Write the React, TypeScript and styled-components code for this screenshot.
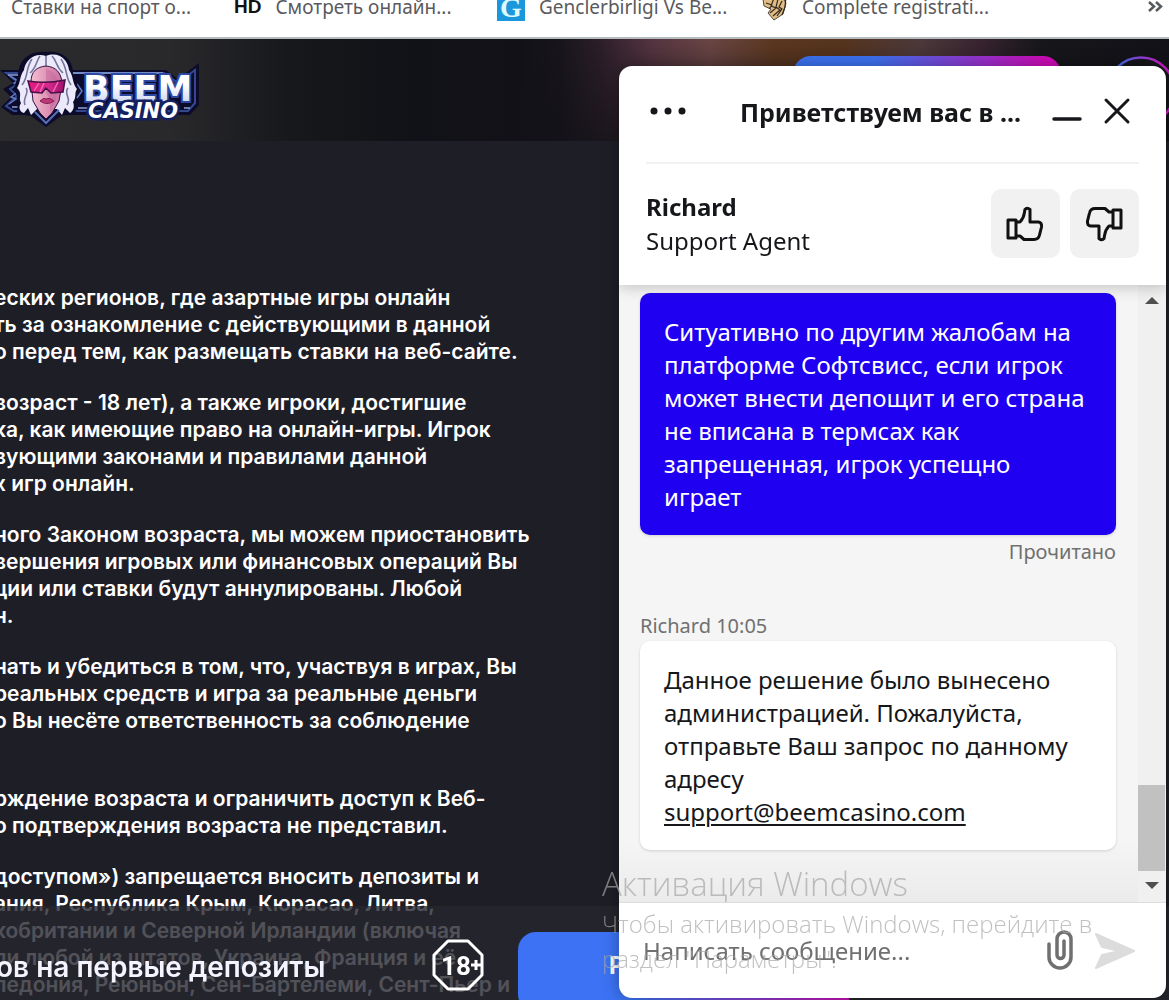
import React from "react";
import styled, { createGlobalStyle } from "styled-components";

const GlobalStyle = createGlobalStyle`
  * { box-sizing: border-box; }
  body { margin: 0; background: #1e1e27; font-family: "Noto Sans", sans-serif; overflow: hidden; }
  button, input { font-family: inherit; }
`;

const Page = styled.div`
  height: 100vh;
  overflow: hidden;
  display: flex;
  flex-direction: column;
`;

const Bookmarks = styled.nav`
  flex: none;
  display: flex;
  height: 39px;
  padding: 0 6px 0 11px;
  background: #fff;
  border-bottom: 2px solid #b4bcbf;
  overflow: hidden;
`;

const Bookmark = styled.a<{ $width: number }>`
  display: flex;
  align-items: center;
  gap: 14px;
  height: 40px;
  margin-top: -13px;
  width: ${(p) => p.$width}px;
  color: #5a5a5e;
  font-size: 19px;
  line-height: 28px;
  text-decoration: none;
  white-space: nowrap;
`;

const Hd = styled.b`
  color: #111;
  font: 700 19px/28px "Liberation Sans", sans-serif;
`;

const MoreBookmarks = styled.button`
  display: flex;
  margin: 0 0 0 auto;
  padding: 0;
  border: 0;
  background: none;
`;

const Header = styled.header`
  flex: none;
  display: flex;
  align-items: flex-start;
  height: 102px;
  overflow: hidden;
  background:
    linear-gradient(180deg, rgba(18, 17, 23, 0) 0, rgba(18, 17, 23, 0.7) 100%) right / 660px 100% no-repeat,
    linear-gradient(90deg, #2b2b2e 0, #29292c 170px, #17181b 290px, #111217 410px, #121117 520px, #17151b 560px, #2c1e29 600px, #533440 650px, #6a4544 710px, #5b371f 775px, #57341d 840px, #4c393b 920px, #38232f 980px, #17171b 1040px, #111117 1169px);
`;

const HeaderActions = styled.div`
  display: flex;
  gap: 45px;
  margin: 17px -7px 0 auto;
`;

const HeaderPill = styled.button`
  width: 268px;
  height: 70px;
  border: 0;
  border-radius: 18px;
  background: linear-gradient(90deg, #3c72f0 30%, #d00ab8 95%);
`;

const Article = styled.main`
  flex: 1;
  min-height: 0;
  overflow: hidden;
  padding: 143px 0 0;
  margin-left: -6px;
  color: #fff;
  font-family: Inter, sans-serif;
  font-weight: 600;
  font-size: 21px;
  line-height: 27px;
`;

const Paragraph = styled.p`
  margin: 0 0 24px;
  white-space: pre;
`;

const PromoBar = styled.aside`
  position: fixed;
  left: 0;
  right: 0;
  bottom: 0;
  height: 94px;
  display: flex;
  overflow: hidden;
  background: rgba(37, 37, 46, 0.8);
`;

const PromoText = styled.strong`
  width: 432px;
  margin-left: -4px;
  padding-top: 44px;
  color: #f3f4ff;
  font: 600 28px/34px Inter, sans-serif;
  white-space: nowrap;
`;

const AgeMark = styled.svg`
  width: 52px;
  height: 52px;
  margin: 33px 34px 0 4px;
`;

const PromoButton = styled.button`
  width: 332px;
  height: 80px;
  margin-top: 26px;
  padding: 0 0 12px 91px;
  border: 0;
  border-radius: 18px;
  background: linear-gradient(90deg, #3c72f3 35%, #c812b4 100%);
  color: #fff;
  font: 700 24px/32px Inter, sans-serif;
  text-align: left;
`;

const Chat = styled.section`
  position: fixed;
  top: 66px;
  right: 3px;
  bottom: 2px;
  width: 547px;
  max-width: calc(100% - 6px);
  display: flex;
  flex-direction: column;
  border-radius: 13px;
  overflow: hidden;
  background: #fff;
  color: #15171a;
  box-shadow: 0 0 16px rgba(0, 0, 0, 0.35);
`;

const ChatTop = styled.div`
  flex: none;
  padding: 0 27px;
  z-index: 1;
  box-shadow: 0 2px 14px rgba(0, 0, 0, 0.22);
`;

const TitleRow = styled.div`
  display: flex;
  align-items: center;
  height: 98px;
  padding: 0 8px 6px 4px;
  border-bottom: 2px solid #f2f2f3;
`;

const IconButton = styled.button`
  flex: none;
  display: flex;
  align-items: center;
  justify-content: center;
  padding: 0;
  border: 0;
  background: none;
  color: inherit;
`;

const Title = styled.h1`
  flex: 1;
  margin: 0 28px 0 52px;
  padding-top: 2px;
  font-size: 25px;
  line-height: 32px;
  font-weight: 700;
  text-align: center;
  white-space: nowrap;
`;

const WindowButtons = styled.div`
  display: flex;
  gap: 20px;
`;

const AgentRow = styled.div`
  display: flex;
  align-items: center;
  gap: 10px;
  height: 121px;
  padding-bottom: 2px;
`;

const Agent = styled.div`
  flex: 1;
  font-size: 24px;
  line-height: 34px;
`;

const Rate = styled.button`
  display: flex;
  align-items: center;
  justify-content: center;
  width: 69px;
  height: 69px;
  padding: 0 2px 0 0;
  border: 0;
  border-radius: 10px;
  background: #f1f1f1;
  color: #111;
`;

const Body = styled.div`
  flex: 1;
  min-height: 0;
  display: flex;
  background: linear-gradient(180deg, #f5f5f5 90%, #ebebeb 100%);
  border-bottom: 1px solid #ddd;
`;

const Messages = styled.div`
  flex: 1;
  display: flex;
  flex-direction: column;
  padding: 8px 22px 0 21px;
`;

const Bubble = styled.p<{ $own?: boolean }>`
  margin: 0;
  padding: 22px 24px;
  border-radius: 10px;
  background: ${(p) => (p.$own ? "#2000f0" : "#fff")};
  color: ${(p) => (p.$own ? "#fff" : "#15171a")};
  font-size: 24px;
  line-height: 33px;
  box-shadow: 0 1px 3px rgba(0, 0, 0, 0.15);

  a { color: inherit; text-decoration-thickness: 2px; text-underline-offset: 3px; }
`;

const Note = styled.div<{ $end?: boolean }>`
  color: #707070;
  font-size: 20px;
  line-height: 28px;
  padding: ${(p) => (p.$end ? "3px 0 0" : "46px 0 1px")};
  text-align: ${(p) => (p.$end ? "right" : "left")};
`;

const ScrollTrack = styled.div`
  display: flex;
  flex-direction: column;
  align-items: center;
  width: 28px;
  padding: 11px 1px 12px 0;
  background: #f0f0f0;
`;

const ScrollThumb = styled.div`
  width: 27px;
  height: 86px;
  margin: auto 0 10px;
  background: #c1c1c1;
`;

const Arrow = styled.svg`
  width: 14px;
  height: 9px;
  fill: #505050;
`;

const Composer = styled.form`
  flex: none;
  display: flex;
  align-items: center;
  height: 95px;
  padding: 0 30px 0 24px;
`;

const MessageInput = styled.input`
  flex: 1;
  min-width: 0;
  padding: 0;
  border: 0;
  outline: 0;
  background: none;
  font-size: 24px;
  line-height: 32px;

  &::placeholder { color: #707070; opacity: 1; }
`;

const Activation = styled.div`
  position: fixed;
  left: 602px;
  top: 862px;
  width: 540px;
  color: rgba(165, 165, 165, 0.7);
  font-family: "Open Sans", sans-serif;
  font-weight: 350;
  font-size: 24px;
  line-height: 35px;
  pointer-events: none;
  white-space: nowrap;
`;

const ActivationTitle = styled.div`
  font-size: 33px;
  line-height: 44px;
`;

const paragraphs = [
  "еских регионов, где азартные игры онлайн\nть за ознакомление с действующими в данной\nо перед тем, как размещать ставки на веб-сайте.",
  "возраст - 18 лет), а также игроки, достигшие\nка, как имеющие право на онлайн-игры. Игрок\nвующими законами и правилами данной\nх игр онлайн.",
  "ного Законом возраста, мы можем приостановить\nвершения игровых или финансовых операций Вы\nции или ставки будут аннулированы. Любой\nн.",
  "нать и убедиться в том, что, участвуя в играх, Вы\nреальных средств и игра за реальные деньги\nо Вы несёте ответственность за соблюдение\n ",
  "рждение возраста и ограничить доступ к Веб-\nо подтверждения возраста не представил.",
  "доступом») запрещается вносить депозиты и\nания, Республика Крым, Кюрасао, Литва,\nкобритании и Северной Ирландии (включая\nли любой из штатов, Украина, Франция и её\nледония, Реюньон, Сен-Бартелеми, Сент-Пьер и",
];

function Logo() {
  return (
    <svg width="204" height="90" viewBox="0 0 204 90" aria-label="Beem Casino">
      <defs>
        <linearGradient id="skin" x1="0" x2="1">
          <stop offset="0" stopColor="#f5bdcf" />
          <stop offset="1" stopColor="#c96f9f" />
        </linearGradient>
        <linearGradient id="visor" x1="0" x2="1">
          <stop offset="0" stopColor="#e0187f" />
          <stop offset="0.55" stopColor="#d62a8c" />
          <stop offset="1" stopColor="#9c0e6b" />
        </linearGradient>
        <linearGradient id="letters" x1="0" x2="0" y1="0" y2="1">
          <stop offset="0.4" stopColor="#fff" />
          <stop offset="1" stopColor="#bfc9f2" />
        </linearGradient>
      </defs>
      <path d="M0 31H166L178 40 199 24V66L190 76H12L1 68 11 58 3 50 13 44Z" fill="#0c0b2a" />
      <path d="M6 34H164L178 44 195 31V64L188 72H14L6 67 17 57 10 50 19 44Z" fill="none" stroke="#33498f" strokeWidth="2" />
      <path d="M8 36h12M70 34h93M12 68h18M78 69h12M184 69h6" stroke="#8ba2d8" strokeWidth="1.5" />
      <path d="M77 45l5 7-5 7M10 37l8 5-4 2 7 5M9 65l7-5-5-2 7-5" fill="none" stroke="#647cc6" strokeWidth="1.5" />
      <path d="M46 13C27 11 18 24 18 37L14 49 18 60 17 75 31 77 46 88 61 77 76 74 74 62 79 50 73 36C74 22 64 11 46 13Z" fill="#0c0b2a" />
      <path d="M46 17C34 13 25 22 24 31 19 38 21 43 17 49 23 54 18 59 21 64 17 70 22 74 24 74L28 69 31 76 37 70H57L62 76 65 69 70 74C73 72 75 68 73 63 77 58 74 54 77 50 72 44 74 38 69 31 68 21 59 12 46 17Z" fill="#ebe9fa" />
      <path d="M46 17V29M40 17C36 22 37 28 30 34M52 17C57 22 56 28 63 34M32 20C25 30 29 37 22 46M61 20C68 30 65 38 71 46M26 49C30 54 22 59 25 66M68 49C63 55 72 59 67 66" fill="none" stroke="#77759e" strokeWidth="1.6" />
      <path d="M31 43C31 32 37 28 46 27 56 28 61 33 62 44L59 62 52 74 46 80 40 74 33 62Z" fill="url(#skin)" stroke="#351446" />
      <path d="M46 30C52 31 57 36 58 44L56 62 50 74V61L46 53Z" fill="#b95391" opacity=".35" />
      <path d="M28 42Q46 45 65 41L63 53 51 54 46 49 42 54 31 53Z" fill="url(#visor)" stroke="#461045" strokeWidth="1.5" />
      <path d="M39 44l-5 8M44 44l-4 9M58 43l-5 10" stroke="#f16eb2" strokeWidth="1.4" />
      <path d="M40 62Q44 58 46 60 50 58 54 62 47 67 40 62Z" fill="#c33879" stroke="#7e204f" />
      <path d="M35 73L46 84 59 71" fill="none" stroke="#5770b9" strokeWidth="2" />
      <g fontFamily="DejaVu Sans, sans-serif" fontWeight="700" paintOrder="stroke">
        <text x="83" y="62" fontSize="35" fill="url(#letters)" stroke="#2c48a2" strokeWidth="4">BEEM</text>
        <text x="88" y="79" fontSize="21" fontStyle="italic" fill="#fff" stroke="#14205f" strokeWidth="5">CASINO</text>
      </g>
    </svg>
  );
}

function Thumb({ down }: { down?: boolean }) {
  return (
    <svg width="40" height="40" viewBox="0 0 40 40" fill="none" stroke="currentColor" strokeWidth="3" strokeLinejoin="round">
      <g transform={down ? "rotate(180 20 20)" : undefined}>
        <path d="M3 16H11V34H3ZM11 18H15C20 13 19 9 20 5.500Q22 3 25 5.500V18H33.500Q37 18.500 36.500 23L34.500 31Q33.500 35.500 29 35.500H19L15 32H11" />
      </g>
    </svg>
  );
}

export default function App() {
  return (
    <Page>
      <GlobalStyle />
      <Bookmarks>
        <Bookmark href="#" $width={223}>Ставки на спорт о...</Bookmark>
        <Bookmark href="#" $width={263}><Hd>HD</Hd>Смотреть онлайн...</Bookmark>
        <Bookmark href="#" $width={264}>
          <svg width="28" height="28" viewBox="0 0 28 28">
            <rect width="28" height="28" fill="#1b98dc" />
            <text x="3" y="24" fontFamily="Liberation Serif, serif" fontWeight="700" fontSize="28" fill="#e0fbff">G</text>
          </svg>
          Genclerbirligi Vs Be...
        </Bookmark>
        <Bookmark href="#" $width={240}>
          <svg width="27" height="28" viewBox="0 0 27 28">
            <path d="M2 6L8 2 21 4 25 10 22 21 13 27 7 20 10 16 3 13Z" fill="#dfbd85" stroke="#554a3c" />
            <path d="M5 10l6 2-3 4M13 5l-3 8 5 2-6 5M17 6l-2 8 4 3-7 6M21 8l-3 6 3 2-5 7M25 3l-1 11-3 8" fill="none" stroke="#33291f" strokeWidth="1.2" />
          </svg>
          Complete registrati...
        </Bookmark>
        <MoreBookmarks aria-label="Ещё">
          <svg width="16" height="14" viewBox="0 0 16 14" fill="none" stroke="#555a5e" strokeWidth="2.5">
            <path d="M2 2l5 4.500-5 4.500M9 2l5 4.500-5 4.500" />
          </svg>
        </MoreBookmarks>
      </Bookmarks>

      <Header>
        <Logo />
        <HeaderActions>
          <HeaderPill aria-label="Регистрация" />
          <svg width="70" height="70" viewBox="0 0 70 70">
            <linearGradient id="ring"><stop offset="0.1" stopColor="#3c72f0" /><stop offset="0.8" stopColor="#c71bc4" /></linearGradient>
            <circle cx="35" cy="35" r="33.500" fill="#15151b" stroke="url(#ring)" strokeWidth="2.500" />
          </svg>
        </HeaderActions>
      </Header>

      <Article>
        {paragraphs.map((text) => <Paragraph key={text}>{text}</Paragraph>)}
      </Article>

      <PromoBar>
        <PromoText>ов на первые депозиты</PromoText>
        <AgeMark viewBox="0 0 52 52">
          <path d="M16 2H36L50 16V36L36 50H16L2 36V16Z" fill="none" stroke="#fff" strokeWidth="3" strokeLinejoin="round" />
          <text x="9" y="36" fontFamily="Roboto, sans-serif" fontWeight="700" fontSize="26" fill="#fff">18</text>
          <path d="M39 26h10M44 21v10" stroke="#fff" strokeWidth="3" />
        </AgeMark>
        <PromoButton>Р</PromoButton>
      </PromoBar>

      <Chat>
        <ChatTop>
          <TitleRow>
            <IconButton aria-label="Меню">
              <svg width="36" height="8" viewBox="0 0 36 8" fill="currentColor">
                <circle cx="4" cy="4" r="3.500" /><circle cx="18" cy="4" r="3.500" /><circle cx="32" cy="4" r="3.500" />
              </svg>
            </IconButton>
            <Title>Приветствуем вас в ...</Title>
            <WindowButtons>
              <IconButton aria-label="Свернуть">
                <svg width="32" height="28" viewBox="0 0 32 28"><path d="M3 22H29" stroke="currentColor" strokeWidth="3.500" strokeLinecap="round" /></svg>
              </IconButton>
              <IconButton aria-label="Закрыть">
                <svg width="28" height="28" viewBox="0 0 28 28"><path d="M3 3L25 25M25 3L3 25" stroke="currentColor" strokeWidth="3" strokeLinecap="round" /></svg>
              </IconButton>
            </WindowButtons>
          </TitleRow>
          <AgentRow>
            <Agent><b>Richard</b><br />Support Agent</Agent>
            <Rate aria-label="Нравится"><Thumb /></Rate>
            <Rate aria-label="Не нравится"><Thumb down /></Rate>
          </AgentRow>
        </ChatTop>
        <Body>
          <Messages>
            <Bubble $own>
              Ситуативно по другим жалобам на платформе Софтсвисс, если игрок может внести депощит и его страна не вписана в термсах как запрещенная, игрок успещно играет
            </Bubble>
            <Note $end>Прочитано</Note>
            <Note>Richard 10:05</Note>
            <Bubble>
              Данное решение было вынесено администрацией. Пожалуйста, отправьте Ваш запрос по данному адресу<br />
              <a href="mailto:support@beemcasino.com">support@beemcasino.com</a>
            </Bubble>
          </Messages>
          <ScrollTrack>
            <Arrow viewBox="0 0 14 9"><path d="M0 8L7 1 14 8Z" /></Arrow>
            <ScrollThumb />
            <Arrow viewBox="0 0 14 9"><path d="M0 1L7 8 14 1Z" /></Arrow>
          </ScrollTrack>
        </Body>
        <Composer>
          <MessageInput aria-label="Сообщение" placeholder="Написать сообщение..." />
          <IconButton type="button" aria-label="Прикрепить файл">
            <svg width="28" height="42" viewBox="0 0 28 42" fill="none" stroke="#707070" strokeWidth="3.500" strokeLinecap="round">
              <path d="M3 14V27A11 11 0 0 0 25 27V9A7 7 0 0 0 11 9V25A3.500 3.500 0 0 0 18 25V11" />
            </svg>
          </IconButton>
          <IconButton type="submit" aria-label="Отправить">
            <svg width="62" height="40" viewBox="0 0 62 40"><path d="M22 3L60 20 22 37 28 24 46 20 28 16Z" fill="#dcdcdc" stroke="#dcdcdc" strokeWidth="2" strokeLinejoin="round" /></svg>
          </IconButton>
        </Composer>
      </Chat>

      <Activation>
        <ActivationTitle>Активация Windows</ActivationTitle>
        Чтобы активировать Windows, перейдите в<br />раздел "Параметры".
      </Activation>
    </Page>
  );
}
